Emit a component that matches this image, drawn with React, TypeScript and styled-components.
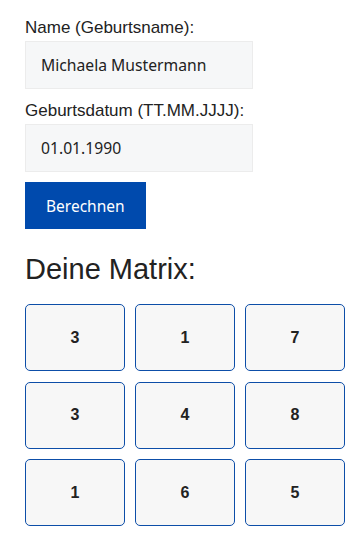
import styled, { createGlobalStyle } from 'styled-components';

const GlobalStyle = createGlobalStyle`
  body {
    margin: 0;
    background: #fff;
    font-family: "Liberation Sans", Arial, sans-serif;
    color: #222;
  }
`;

const Page = styled.div`
  padding: 18px 15px 0 25px;
  display: flex;
  flex-direction: column;
`;

const Field = styled.label`
  display: flex;
  flex-direction: column;
  gap: 4px;
  margin-bottom: 12px;
`;

const LabelText = styled.span`
  font-size: 17px;
  line-height: 19px;
  color: #222;
`;

const Input = styled.input`
  box-sizing: border-box;
  width: 228px;
  height: 48px;
  padding: 0 15px;
  background: #f6f7f8;
  border: 1px solid #ececec;
  font-family: "Noto Sans", "Open Sans", sans-serif;
  font-size: 15.7px;
  color: #222;
  outline: none;
`;

const Button = styled.button`
  align-self: flex-start;
  margin-top: -2px;
  height: 47px;
  padding: 0 21px;
  background: #004aad;
  color: #fff;
  border: none;
  font-family: "Noto Sans", "Open Sans", sans-serif;
  font-size: 15.5px;
  cursor: pointer;
`;

const Heading = styled.h2`
  margin: 23.5px 0 18.5px;
  font-size: 29px;
  font-weight: normal;
  line-height: 33px;
  color: #222;
`;

const Grid = styled.div`
  display: grid;
  grid-template-columns: repeat(3, 100px);
  grid-auto-rows: 67px;
  column-gap: 10px;
  row-gap: 10.5px;
`;

const Cell = styled.div`
  box-sizing: border-box;
  display: flex;
  align-items: center;
  justify-content: center;
  background: #f7f7f7;
  border: 1px solid #0d4ea8;
  border-radius: 5px;
  font-size: 16px;
  font-weight: bold;
  color: #222;
`;

const matrix = [3, 1, 7, 3, 4, 8, 1, 6, 5];

const App = () => {
  return (
    <>
      <GlobalStyle />
      <Page>
        <Field>
          <LabelText>Name (Geburtsname):</LabelText>
          <Input defaultValue="Michaela Mustermann" />
        </Field>
        <Field>
          <LabelText>Geburtsdatum (TT.MM.JJJJ):</LabelText>
          <Input defaultValue="01.01.1990" />
        </Field>
        <Button>Berechnen</Button>
        <Heading>Deine Matrix:</Heading>
        <Grid>
          {matrix.map((n, i) => (
            <Cell key={i}>{n}</Cell>
          ))}
        </Grid>
      </Page>
    </>
  );
};

export default App;
